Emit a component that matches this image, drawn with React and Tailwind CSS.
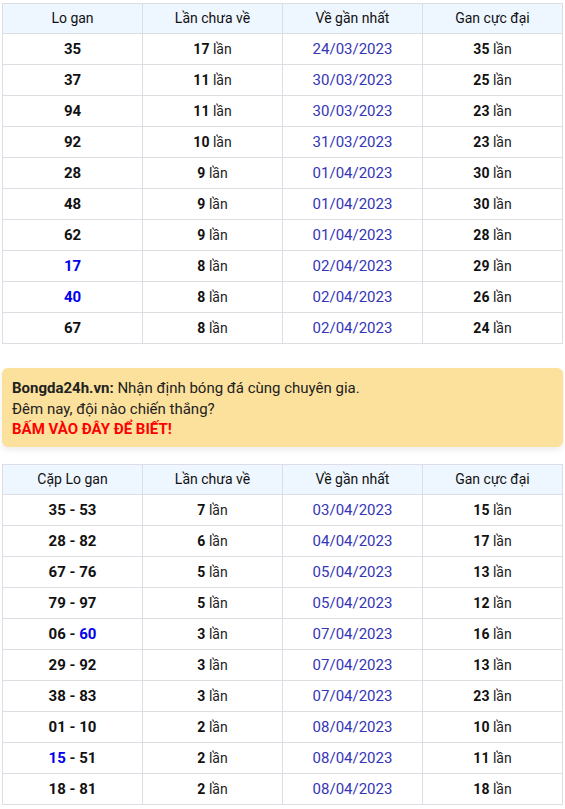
const table1 = [
  { lo: ['35'], chua: 17, ve: '24/03/2023', gan: 35 },
  { lo: ['37'], chua: 11, ve: '30/03/2023', gan: 25 },
  { lo: ['94'], chua: 11, ve: '30/03/2023', gan: 23 },
  { lo: ['92'], chua: 10, ve: '31/03/2023', gan: 23 },
  { lo: ['28'], chua: 9, ve: '01/04/2023', gan: 30 },
  { lo: ['48'], chua: 9, ve: '01/04/2023', gan: 30 },
  { lo: ['62'], chua: 9, ve: '01/04/2023', gan: 28 },
  { lo: ['17*'], chua: 8, ve: '02/04/2023', gan: 29 },
  { lo: ['40*'], chua: 8, ve: '02/04/2023', gan: 26 },
  { lo: ['67'], chua: 8, ve: '02/04/2023', gan: 24 },
];

const table2 = [
  { lo: ['35', '53'], chua: 7, ve: '03/04/2023', gan: 15 },
  { lo: ['28', '82'], chua: 6, ve: '04/04/2023', gan: 17 },
  { lo: ['67', '76'], chua: 5, ve: '05/04/2023', gan: 13 },
  { lo: ['79', '97'], chua: 5, ve: '05/04/2023', gan: 12 },
  { lo: ['06', '60*'], chua: 3, ve: '07/04/2023', gan: 16 },
  { lo: ['29', '92'], chua: 3, ve: '07/04/2023', gan: 13 },
  { lo: ['38', '83'], chua: 3, ve: '07/04/2023', gan: 23 },
  { lo: ['01', '10'], chua: 2, ve: '08/04/2023', gan: 10 },
  { lo: ['15*', '51'], chua: 2, ve: '08/04/2023', gan: 11 },
  { lo: ['18', '81'], chua: 2, ve: '08/04/2023', gan: 18 },
];

function Num({ v }) {
  const blue = v.endsWith('*');
  return <span className={blue ? 'text-[#0000ee]' : ''}>{v.replace('*', '')}</span>;
}

function GanTable({ first, rows }) {
  const th = 'h-[30px] border border-[#dcdee3] font-normal text-[#111] w-1/4 p-0';
  const td = 'h-[31px] border border-[#dcdee3] p-0 text-center';
  return (
    <table className="w-[561px] border-collapse table-fixed text-[14px]">
      <thead>
        <tr className="bg-[#eef6ff]">
          <th className={th}>{first}</th>
          <th className={th}>Lần chưa về</th>
          <th className={th}>Về gần nhất</th>
          <th className={th}>Gan cực đại</th>
        </tr>
      </thead>
      <tbody>
        {rows.map((r, i) => (
          <tr key={i} className="bg-white">
            <td className={td + ' text-[15px] font-bold text-[#111]'}>
              {r.lo.length === 1 ? (
                <Num v={r.lo[0]} />
              ) : (
                <>
                  <Num v={r.lo[0]} /> - <Num v={r.lo[1]} />
                </>
              )}
            </td>
            <td className={td + ' text-[#222]'}>
              <b className="text-[#111]">{r.chua}</b> lần
            </td>
            <td className={td + ' text-[15px] text-[#3535b8]'}>{r.ve}</td>
            <td className={td + ' text-[#222]'}>
              <b className="text-[#111]">{r.gan}</b> lần
            </td>
          </tr>
        ))}
      </tbody>
    </table>
  );
}

export default function App() {
  return (
    <div className="bg-white pt-[3px] pl-[2px] pb-[4px] font-['Roboto','Liberation_Sans',sans-serif]">
      <GanTable first="Lo gan" rows={table1} />
      <div className="mt-[24px] mb-[17px] w-[561px] h-[79px] rounded-[6px] bg-[#fce19c] px-[10px] pt-[10px] text-[15px] leading-[20.5px] text-[#222] shadow-[0_3px_6px_rgba(0,0,0,0.08)]">
        <div>
          <b>Bongda24h.vn:</b> Nhận định bóng đá cùng chuyên gia.
        </div>
        <div>Đêm nay, đội nào chiến thắng?</div>
        <div className="font-bold text-[#ff0000]">BẤM VÀO ĐÂY ĐỂ BIẾT!</div>
      </div>
      <GanTable first="Cặp Lo gan" rows={table2} />
    </div>
  );
}
